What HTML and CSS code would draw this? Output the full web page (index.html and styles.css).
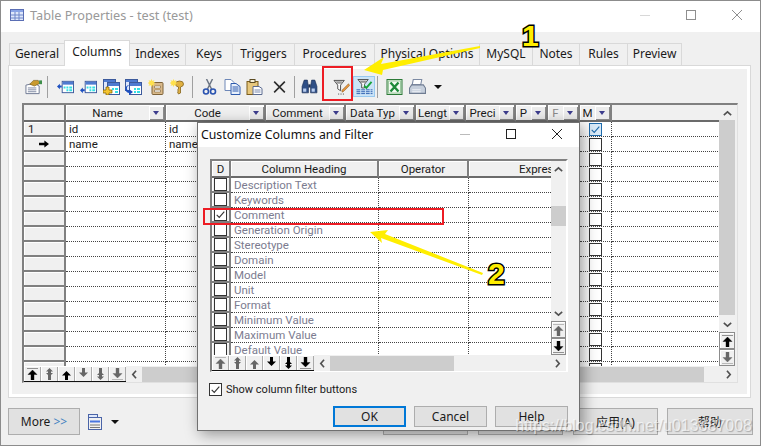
FILE: index.html
```html
<!DOCTYPE html>
<html lang="en">
<head>
    <meta charset="UTF-8">
    <meta name="viewport" content="width=device-width, initial-scale=1.0">
    <title>Table Properties - test (test)</title>
    <link rel="stylesheet" href="styles.css">
</head>
<body>
    <svg class="defs" xmlns="http://www.w3.org/2000/svg">
        <symbol id="i-table" viewBox="0 0 14 12">
            <rect x=".5" y=".5" width="13" height="11" fill="#dfe8fb" stroke="#5a6eb4"/>
            <rect x="1" y="1" width="12" height="2" fill="#8aa4e6"/>
            <path d="M1 6h12M1 9h12M5 3v8M9 3v8" stroke="#6f86c8"/>
        </symbol>
        <symbol id="i-prop" viewBox="0 0 18 16">
            <path d="M1 6l9-2 5 3v8H1z" fill="#fff" stroke="#6b7690"/>
            <path d="M3 9h9M3 11h9M3 13h9" stroke="#7b86a0"/>
            <path d="M5 5l4-4h5l2 3-6 3z" fill="#c99a2e" stroke="#6b5010" stroke-width=".6"/>
            <rect x="15" y="1" width="3" height="4" fill="#3f8f4a"/>
        </symbol>
        <symbol id="i-rowa" viewBox="0 0 18 15">
            <rect x="5.5" y="1.5" width="12" height="12" fill="#fff" stroke="#3c5a9c"/>
            <rect x="6" y="2" width="11" height="3" fill="#4f7bd0"/>
            <path d="M7 7h2v2H7zM10 7h2v2h-2zM13 7h3v2h-3zM10 10h2v2h-2zM13 10h3v2h-3z" fill="#35dfe4"/>
            <path d="M0 7l3-3v2h2v2H3v2z" fill="#1c4fc0"/>
        </symbol>
        <symbol id="i-rowb" viewBox="0 0 18 15">
            <rect x="5.5" y="1.5" width="12" height="12" fill="#fff" stroke="#3c5a9c"/>
            <rect x="6" y="2" width="11" height="3" fill="#4f7bd0"/>
            <path d="M7 7h2v2H7zM10 7h2v2h-2zM13 7h3v2h-3zM10 10h2v2h-2zM13 10h3v2h-3z" fill="#35dfe4"/>
            <path d="M0 11l3-3v2h2v2H3v2z" fill="#1c4fc0"/>
        </symbol>
        <symbol id="i-tadd" viewBox="0 0 17 16">
            <rect x=".5" y=".5" width="12" height="11" fill="#dfe8fb" stroke="#3c5a9c"/>
            <rect x="1" y="1" width="11" height="2" fill="#4f7bd0"/>
            <rect x="4.5" y="3.5" width="12" height="12" fill="#fff" stroke="#3c5a9c"/>
            <rect x="5" y="4" width="11" height="3" fill="#4f7bd0"/>
            <path d="M9 9h2v2H9zM12 9h3v2h-3zM12 12h3v2h-3z" fill="#35dfe4"/>
            <path d="M3 8h3v3h3v3H6v2H3v-2H0v-3h3z" fill="#f4c430" stroke="#7a5a00" stroke-width=".7"/>
        </symbol>
        <symbol id="i-tmove" viewBox="0 0 17 16">
            <rect x=".5" y=".5" width="12" height="11" fill="#dfe8fb" stroke="#3c5a9c"/>
            <rect x="1" y="1" width="11" height="2" fill="#4f7bd0"/>
            <rect x="4.5" y="3.5" width="12" height="12" fill="#fff" stroke="#3c5a9c"/>
            <rect x="5" y="4" width="11" height="3" fill="#4f7bd0"/>
            <path d="M9 9h2v2H9zM12 9h3v2h-3zM9 12h2v2H9zM12 12h3v2h-3z" fill="#35dfe4"/>
            <path d="M5 6C1 7 1 11 4 12v-2l4 3-4 3v-2C-1 13-1 6 5 6z" fill="#1c4fc0"/>
        </symbol>
        <symbol id="i-safe" viewBox="0 0 16 16">
            <rect x="3.5" y="3.5" width="11" height="12" rx="1" fill="#d9b98a" stroke="#7d6238"/>
            <path d="M6 7h6v2H6zM6 11h6v2H6z" fill="#fff" stroke="#7d6238" stroke-width=".6"/>
            <path d="M3 0l1 2 2-1-1 2 2 1-2 1 1 2-2-1-1 2-1-2-2 1 1-2-2-1 2-1-1-2 2 1z" fill="#ffe14d"/>
        </symbol>
        <symbol id="i-key" viewBox="0 0 16 16">
            <path d="M5 5a4 3 0 0 1 8 0 4 3 0 0 1-3 3v6l-2 1-1-2 1-1-1-1 1-1V8a4 3 0 0 1-3-3z" fill="#e0b040" stroke="#84631a" stroke-width=".8"/>
            <path d="M3 0l1 2 2-1-1 2 2 1-2 1 1 2-2-1-1 2-1-2-2 1 1-2-2-1 2-1-1-2 2 1z" fill="#ffe14d"/>
        </symbol>
        <symbol id="i-cut" viewBox="0 0 14 16">
            <path d="M4 0l5 10M10 0L5 10" stroke="#6d7684" stroke-width="1.5" fill="none"/>
            <circle cx="3.5" cy="12.5" r="2.5" fill="none" stroke="#2a53b0" stroke-width="1.6"/>
            <circle cx="10.5" cy="12.5" r="2.5" fill="none" stroke="#2a53b0" stroke-width="1.6"/>
        </symbol>
        <symbol id="i-copy" viewBox="0 0 16 16">
            <path d="M.5.5h6l3 3v8h-9z" fill="#fff" stroke="#6e88b8"/>
            <path d="M6.5 4.5h5l4 3v8h-9z" fill="#e8f0fb" stroke="#2e5bad"/>
            <path d="M8 8h6M8 10h6M8 12h6" stroke="#2e5bad"/>
        </symbol>
        <symbol id="i-paste" viewBox="0 0 16 16">
            <rect x=".5" y="2.5" width="11" height="13" fill="#e7c77c" stroke="#7a5c1c"/>
            <rect x="3.5" y=".5" width="5" height="3" fill="#f7f0d8" stroke="#5b4a20"/>
            <path d="M6.5 7.5h6l3 2v6h-9z" fill="#fff" stroke="#5a6a90"/>
            <path d="M8 11h6M8 13h6" stroke="#7a8ab0"/>
        </symbol>
        <symbol id="i-del" viewBox="-2 -2 18 18">
            <path d="M1 1l12 12M13 1L1 13" stroke="#2c2c2c" stroke-width="1.8" fill="none"/>
        </symbol>
        <symbol id="i-find" viewBox="0 0 16 15">
            <path d="M3 1h3l1 6v6H1V7zM10 1h3l2 6v6H9V7z" fill="#2f4f86" stroke="#1c2f55" stroke-width=".6"/>
            <path d="M7 5h2v3H7z" fill="#1c2f55"/>
            <path d="M2 9h3v3H2zM10 9h3v3h-3z" fill="#b9cdef"/>
        </symbol>
        <symbol id="i-fedit" viewBox="0 0 17 17">
            <path d="M.5 1.5h11l-4 5v6l-3-2v-4z" fill="#fff" stroke="#4a4a4a"/>
            <path d="M2 2.5h8l-2 2.500H4z" fill="#9a9a9a"/>
            <path d="M9 12l7-7 1 2-6 6-2 1z" fill="#e8963c" stroke="#8a5a1e" stroke-width=".6"/>
            <path d="M5 16h1M7.500 16h1M10 16h1" stroke="#333"/>
        </symbol>
        <symbol id="i-fcheck" viewBox="0 0 17 17">
            <path d="M1.500.5h11l-4 5v4h-3v-4z" fill="#fff" stroke="#4a4a4a"/>
            <path d="M3 1.500h8l-2 2.500H5z" fill="#8f8f8f"/>
            <path d="M8 7l2.500 2.500L16 3" stroke="#19a33a" stroke-width="2" fill="none"/>
            <path d="M0 11.500h17M0 13.500h17M0 15.500h17" stroke="#2f5fb0" stroke-dasharray="4 1"/>
        </symbol>
        <symbol id="i-excel" viewBox="0 0 16 16">
            <rect x=".5" y=".5" width="15" height="15" fill="#dfeedd" stroke="#2c7a38"/>
            <rect x="2" y="2" width="12" height="12" fill="#f6fbf4" stroke="#9cc9a0"/>
            <path d="M4 3.500l8 9M12 3.500l-8 9" stroke="#1f8a3a" stroke-width="2.400"/>
        </symbol>
        <symbol id="i-print" viewBox="0 0 16 15">
            <path d="M4 .5h8l-1 5H3z" fill="#fff" stroke="#7c8aa3"/>
            <path d="M2.500 5.500h11l2 3v5H.5v-5z" fill="#c6cfdc" stroke="#6f7c92"/>
            <path d="M3 10h8M3 12h8" stroke="#eef1f6"/>
        </symbol>
        <symbol id="i-list" viewBox="0 0 14 16">
            <rect x=".5" y=".5" width="9" height="4" fill="#dfe8fb" stroke="#4a64a8"/>
            <rect x=".5" y="3.500" width="13" height="12" fill="#f1f1f1" stroke="#4a64a8"/>
            <rect x="2" y="6.500" width="10" height="2" fill="#4a76e0"/>
            <path d="M2 11h10M2 13.500h10" stroke="#777"/>
        </symbol>
        <symbol id="i-first" viewBox="0 0 11 12">
            <path d="M0 .5h11M5.500 2L10 6.500H7V12H4V6.500H1z" fill="currentColor" stroke="currentColor" stroke-width=".4"/>
        </symbol>
        <symbol id="i-prev2" viewBox="0 0 11 12">
            <path d="M5.500 0L9 3.500H7V5h2L7 7h0v5H4V7L2 5h2V3.500H2z" fill="currentColor"/>
        </symbol>
        <symbol id="i-prev" viewBox="0 0 11 12">
            <path d="M5.500 3L10 7.500H7V12H4V7.500H1z" fill="currentColor"/>
        </symbol>
        <symbol id="i-next" viewBox="0 0 11 12">
            <path d="M4 0h3v4.500h3L5.500 9 1 4.500h3z" fill="currentColor"/>
        </symbol>
        <symbol id="i-next2" viewBox="0 0 11 12">
            <path d="M4 0h3v5l2 2H7v1.500h2L5.500 12 2 8.500h2V7H2l2-2z" fill="currentColor"/>
        </symbol>
        <symbol id="i-last" viewBox="0 0 11 12">
            <path d="M4 0h3v5.500h3L5.500 10 1 5.500h3zM0 11.500h11" fill="currentColor" stroke="currentColor" stroke-width=".4"/>
        </symbol>
        <symbol id="i-up" viewBox="0 0 11 7"><path d="M1 6l4.500-4L10 6" fill="none" stroke="currentColor" stroke-width="2"/></symbol>
        <symbol id="i-down" viewBox="0 0 11 7"><path d="M1 1l4.500 4L10 1" fill="none" stroke="currentColor" stroke-width="2"/></symbol>
        <symbol id="i-left" viewBox="0 0 7 11"><path d="M6 1L2 5.500 6 10" fill="none" stroke="currentColor" stroke-width="2"/></symbol>
        <symbol id="i-right" viewBox="0 0 7 11"><path d="M1 1l4 4.500L1 10" fill="none" stroke="currentColor" stroke-width="2"/></symbol>
        <symbol id="i-check" viewBox="0 0 13 13"><path d="M2 7l3 3 6-7" fill="none" stroke="currentColor" stroke-width="1.300"/></symbol>
        <symbol id="i-arrow" viewBox="0 0 13 9"><path d="M0 3h7V0l6 4.500L7 9V6H0z" fill="#000"/></symbol>
    </svg>

    <div class="window">
        <header class="titlebar">
            <svg class="title-icon"><use href="#i-table"/></svg>
            <span class="title-text">Table Properties - test (test)</span>
            <div class="win-controls faded">
                <span class="win-min"></span>
                <span class="win-max"></span>
                <span class="win-close"></span>
            </div>
        </header>

        <nav class="tabs">
            <a class="tab w55">General</a>
            <a class="tab active w65">Columns</a>
            <a class="tab w56">Indexes</a>
            <a class="tab w47">Keys</a>
            <a class="tab w62">Triggers</a>
            <a class="tab w80">Procedures</a>
            <a class="tab w105">Physical Options</a>
            <a class="tab w53">MySQL</a>
            <a class="tab w47">Notes</a>
            <a class="tab w48">Rules</a>
            <a class="tab w54">Preview</a>
        </nav>

        <section class="panel">
            <div class="toolbar">
                <span class="tool"><svg class="ico"><use href="#i-prop"/></svg></span>
                <span class="sep s1"></span>
                <span class="tool"><svg class="ico"><use href="#i-rowa"/></svg></span>
                <span class="tool"><svg class="ico"><use href="#i-rowb"/></svg></span>
                <span class="tool"><svg class="ico"><use href="#i-tadd"/></svg></span>
                <span class="tool"><svg class="ico"><use href="#i-tmove"/></svg></span>
                <span class="tool"><svg class="ico"><use href="#i-safe"/></svg></span>
                <span class="tool"><svg class="ico"><use href="#i-key"/></svg></span>
                <span class="sep s2"></span>
                <span class="tool"><svg class="ico"><use href="#i-cut"/></svg></span>
                <span class="tool"><svg class="ico"><use href="#i-copy"/></svg></span>
                <span class="tool"><svg class="ico"><use href="#i-paste"/></svg></span>
                <span class="tool tool-del"><svg class="ico"><use href="#i-del"/></svg></span>
                <span class="sep s3"></span>
                <span class="tool"><svg class="ico"><use href="#i-find"/></svg></span>
                <span class="sep s4"></span>
                <span class="tool"><svg class="ico"><use href="#i-fedit"/></svg></span>
                <span class="tool on"><svg class="ico"><use href="#i-fcheck"/></svg></span>
                <span class="sep s5"></span>
                <span class="tool"><svg class="ico"><use href="#i-excel"/></svg></span>
                <span class="tool"><svg class="ico"><use href="#i-print"/></svg></span>
                <span class="caret"></span>
            </div>

            <div class="gridbox">
                <div class="grid-top">
                    <div class="view">
                        <table class="cols">
                            <colgroup>
                                <col class="c42"><col class="c100"><col class="c100"><col class="c80"><col class="c70">
                                <col class="c50"><col class="c50"><col class="c32"><col class="c32"><col class="c32"><col class="c108">
                            </colgroup>
                            <thead>
                                <tr>
                                    <th class="corner"></th>
                                    <th><div class="hd"><span>Name</span><i class="fbtn"></i></div></th>
                                    <th><div class="hd"><span>Code</span><i class="fbtn"></i></div></th>
                                    <th><div class="hd"><span>Comment</span><i class="fbtn"></i></div></th>
                                    <th><div class="hd"><span>Data Typ</span><i class="fbtn"></i></div></th>
                                    <th><div class="hd"><span>Lengt</span><i class="fbtn"></i></div></th>
                                    <th><div class="hd"><span>Preci</span><i class="fbtn"></i></div></th>
                                    <th><div class="hd"><span>P</span><i class="fbtn"></i></div></th>
                                    <th><div class="hd dim"><span>F</span><i class="fbtn"></i></div></th>
                                    <th><div class="hd"><span>M</span><i class="fbtn"></i></div></th>
                                    <th class="blank"></th>
                                </tr>
                            </thead>
                            <tbody>
                                <tr><th class="rowh num">1</th><td>id</td><td>id</td><td colspan="6"></td><td class="mid"><i class="box hot"><svg><use href="#i-check"/></svg></i></td><td></td></tr>
                                <tr><th class="rowh"><svg class="cur"><use href="#i-arrow"/></svg></th><td>name</td><td>name</td><td colspan="6"></td><td class="mid"><i class="box"></i></td><td></td></tr>
                                <tr><th class="rowh"></th><td></td><td></td><td colspan="6"></td><td class="mid"><i class="box"></i></td><td></td></tr>
                                <tr><th class="rowh"></th><td></td><td></td><td colspan="6"></td><td class="mid"><i class="box"></i></td><td></td></tr>
                                <tr><th class="rowh"></th><td></td><td></td><td colspan="6"></td><td class="mid"><i class="box"></i></td><td></td></tr>
                                <tr><th class="rowh"></th><td></td><td></td><td colspan="6"></td><td class="mid"><i class="box"></i></td><td></td></tr>
                                <tr><th class="rowh"></th><td></td><td></td><td colspan="6"></td><td class="mid"><i class="box"></i></td><td></td></tr>
                                <tr><th class="rowh"></th><td></td><td></td><td colspan="6"></td><td class="mid"><i class="box"></i></td><td></td></tr>
                                <tr><th class="rowh"></th><td></td><td></td><td colspan="6"></td><td class="mid"><i class="box"></i></td><td></td></tr>
                                <tr><th class="rowh"></th><td></td><td></td><td colspan="6"></td><td class="mid"><i class="box"></i></td><td></td></tr>
                                <tr><th class="rowh"></th><td></td><td></td><td colspan="6"></td><td class="mid"><i class="box"></i></td><td></td></tr>
                                <tr><th class="rowh"></th><td></td><td></td><td colspan="6"></td><td class="mid"><i class="box"></i></td><td></td></tr>
                                <tr><th class="rowh"></th><td></td><td></td><td colspan="6"></td><td class="mid"><i class="box"></i></td><td></td></tr>
                                <tr><th class="rowh"></th><td></td><td></td><td colspan="6"></td><td class="mid"><i class="box"></i></td><td></td></tr>
                                <tr><th class="rowh"></th><td></td><td></td><td colspan="6"></td><td class="mid"><i class="box"></i></td><td></td></tr>
                                <tr><th class="rowh"></th><td></td><td></td><td colspan="6"></td><td class="mid"><i class="box"></i></td><td></td></tr>
                                <tr><th class="rowh"></th><td></td><td></td><td colspan="6"></td><td class="mid"><i class="box"></i></td><td></td></tr>
                            </tbody>
                        </table>
                    </div>
                    <div class="vscroll main-v">
                        <span class="sarrow"><svg class="chev-v"><use href="#i-up"/></svg></span>
                        <div class="vtrack"><div class="vthumb"></div></div>
                        <span class="sarrow"><svg class="chev-v"><use href="#i-down"/></svg></span>
                        <span class="vbtn black"><svg class="step"><use href="#i-first"/></svg></span>
                        <span class="vbtn grey"><svg class="step"><use href="#i-last"/></svg></span>
                    </div>
                </div>
                <div class="grid-bottom">
                    <div class="steps">
                        <span class="stepbtn black"><svg class="step"><use href="#i-first"/></svg></span>
                        <span class="stepbtn grey"><svg class="step"><use href="#i-prev2"/></svg></span>
                        <span class="stepbtn black"><svg class="step"><use href="#i-prev"/></svg></span>
                        <span class="stepbtn grey"><svg class="step"><use href="#i-next"/></svg></span>
                        <span class="stepbtn grey"><svg class="step"><use href="#i-next2"/></svg></span>
                        <span class="stepbtn grey"><svg class="step"><use href="#i-last"/></svg></span>
                    </div>
                    <div class="hscroll">
                        <svg class="chev-h"><use href="#i-left"/></svg>
                        <div class="hthumb main-h"></div>
                        <svg class="chev-h"><use href="#i-right"/></svg>
                    </div>
                </div>
            </div>
        </section>

        <footer class="actions">
            <button class="btn more">More <span class="more-mark">&gt;&gt;</span></button>
            <svg class="list-icon"><use href="#i-list"/></svg>
            <span class="caret"></span>
            <div class="actions-right">
                <button class="btn wide">确定</button>
                <button class="btn wide">取消</button>
                <button class="btn wide">应用(A)</button>
                <button class="btn wide">帮助</button>
            </div>
        </footer>
    </div>

    <div class="dialog">
        <header class="dlg-title">
            <span>Customize Columns and Filter</span>
            <div class="win-controls">
                <span class="win-min"></span>
                <span class="win-max"></span>
                <span class="win-close"></span>
            </div>
        </header>
        <div class="dlg-body">
            <div class="dlg-box">
                <div class="grid-top">
                    <div class="view dlg-view">
                        <table class="cols dlg-cols">
                            <colgroup><col class="c19"><col class="c148"><col class="c90"><col class="c158"></colgroup>
                            <thead>
                                <tr>
                                    <th><div class="hd plain"><span>D</span></div></th>
                                    <th><div class="hd plain"><span>Column Heading</span></div></th>
                                    <th><div class="hd plain"><span>Operator</span></div></th>
                                    <th><div class="hd plain"><span>Expression</span></div></th>
                                </tr>
                            </thead>
                            <tbody>
                                <tr><th class="rowh"><i class="box"></i></th><td>Description Text</td><td></td><td></td></tr>
                                <tr><th class="rowh"><i class="box"></i></th><td>Keywords</td><td></td><td></td></tr>
                                <tr><th class="rowh"><i class="box"><svg><use href="#i-check"/></svg></i></th><td>Comment</td><td></td><td></td></tr>
                                <tr><th class="rowh"><i class="box"></i></th><td>Generation Origin</td><td></td><td></td></tr>
                                <tr><th class="rowh"><i class="box"></i></th><td>Stereotype</td><td></td><td></td></tr>
                                <tr><th class="rowh"><i class="box"></i></th><td>Domain</td><td></td><td></td></tr>
                                <tr><th class="rowh"><i class="box"></i></th><td>Model</td><td></td><td></td></tr>
                                <tr><th class="rowh"><i class="box"></i></th><td>Unit</td><td></td><td></td></tr>
                                <tr><th class="rowh"><i class="box"></i></th><td>Format</td><td></td><td></td></tr>
                                <tr><th class="rowh"><i class="box"></i></th><td>Minimum Value</td><td></td><td></td></tr>
                                <tr><th class="rowh"><i class="box"></i></th><td>Maximum Value</td><td></td><td></td></tr>
                                <tr><th class="rowh"><i class="box"></i></th><td>Default Value</td><td></td><td></td></tr>
                            </tbody>
                        </table>
                    </div>
                    <div class="vscroll dlg-v">
                        <span class="sarrow"><svg class="chev-v"><use href="#i-up"/></svg></span>
                        <div class="vtrack"><div class="vthumb"></div></div>
                        <span class="sarrow"><svg class="chev-v"><use href="#i-down"/></svg></span>
                        <span class="vbtn grey"><svg class="step"><use href="#i-first"/></svg></span>
                        <span class="vbtn black"><svg class="step"><use href="#i-last"/></svg></span>
                    </div>
                </div>
                <div class="grid-bottom">
                    <div class="steps">
                        <span class="stepbtn grey"><svg class="step"><use href="#i-first"/></svg></span>
                        <span class="stepbtn grey"><svg class="step"><use href="#i-prev2"/></svg></span>
                        <span class="stepbtn grey"><svg class="step"><use href="#i-prev"/></svg></span>
                        <span class="stepbtn black"><svg class="step"><use href="#i-next"/></svg></span>
                        <span class="stepbtn black"><svg class="step"><use href="#i-next2"/></svg></span>
                        <span class="stepbtn black"><svg class="step"><use href="#i-last"/></svg></span>
                    </div>
                    <div class="hscroll">
                        <svg class="chev-h"><use href="#i-left"/></svg>
                        <div class="hthumb dlg-h"></div>
                        <svg class="chev-h"><use href="#i-right"/></svg>
                    </div>
                </div>
            </div>
            <label class="show-filter"><i class="box"><svg><use href="#i-check"/></svg></i>Show column filter buttons</label>
            <div class="dlg-actions">
                <button class="btn dlg-btn default">OK</button>
                <button class="btn dlg-btn">Cancel</button>
                <button class="btn dlg-btn">Help</button>
            </div>
        </div>
    </div>

    <svg class="marks" viewBox="0 0 761 446" xmlns="http://www.w3.org/2000/svg">
        <rect class="mark-red" x="323" y="67" width="29" height="33"/>
        <rect class="mark-red" x="204" y="209" width="239" height="15"/>
        <polygon class="mark-yellow" points="364,70 384,57 381,64 480,46 480,48 383,70 382,75"/>
        <polygon class="mark-yellow" points="370,232 388,230 385,234 483,273 482,275 381,238 382,243"/>
        <text class="mark-num" x="522" y="46">1</text>
        <text class="mark-num" x="488" y="284">2</text>
    </svg>

    <div class="watermark">https://blog.csdn.net/u013887008</div>
</body>
</html>
```

FILE: styles.css
```css
* {
    box-sizing: border-box;
}

html, body {
    margin: 0;
    height: 446px;
    overflow: hidden;
}

body {
    position: relative;
    font-family: "Noto Sans", "Noto Sans CJK SC", sans-serif;
    font-size: 12px;
    color: #1a1a1a;
    background: #f0f0f0;
}

.defs {
    display: none;
}

.window {
    width: 761px;
    height: 446px;
    border: 1px solid #8c8c8c;
    background: #f0f0f0;
    display: flex;
    flex-direction: column;
}

/* title bar */
.titlebar {
    height: 31px;
    flex: none;
    background: #fff;
    display: flex;
    align-items: center;
    padding-left: 9px;
    padding-bottom: 3px;
}

.title-icon {
    width: 14px;
    height: 12px;
    margin-right: 6px;
}

.title-text {
    font-size: 12.7px;
    color: #999;
}

.win-controls {
    margin-left: auto;
    display: flex;
    align-items: center;
    gap: 36px;
    padding-right: 18px;
}

.win-controls span {
    display: block;
    width: 10px;
    height: 10px;
}

.win-min {
    border-bottom: 1px solid #222;
    height: 1px !important;
}

.win-max {
    border: 1px solid #222;
}

.win-close {
    background:
        linear-gradient(45deg, transparent 46%, #222 46%, #222 54%, transparent 54%),
        linear-gradient(-45deg, transparent 46%, #222 46%, #222 54%, transparent 54%);
}

.faded {
    opacity: .5;
}

.faded .win-min {
    opacity: .35;
}

/* tabs */
.tabs {
    height: 33px;
    flex: none;
    display: flex;
    align-items: flex-end;
    padding-left: 9px;
    position: relative;
}

.tab {
    height: 22px;
    line-height: 20px;
    text-align: center;
    border: 1px solid #d9d9d9;
    border-bottom: none;
    margin-left: -1px;
    background: #f0f0f0;
    white-space: nowrap;
}

.tab.active {
    height: 26px;
    line-height: 22px;
    margin-bottom: -1px;
    background: #fff;
}

.w47 { width: 48px; }
.w48 { width: 49px; }
.w53 { width: 54px; }
.w54 { width: 55px; }
.w55 { width: 56px; }
.w56 { width: 57px; }
.w62 { width: 63px; }
.w65 { width: 66px; }
.w80 { width: 81px; }
.w105 { width: 106px; }

/* property sheet */
.panel {
    height: 333px;
    flex: none;
    margin-left: 7px;
    width: 743px;
    border: 1px solid #d9d9d9;
    box-shadow: inset 0 0 0 3px #fff;
    padding: 3px 12px 0 13px;
}

.toolbar {
    height: 34px;
    display: flex;
    align-items: center;
    padding-top: 1px;
}

.tool {
    width: 22.6px;
    height: 21px;
    flex: none;
    display: flex;
    align-items: center;
    justify-content: center;
}

.tool-del {
    margin-left: 2px;
}

.tool.on {
    background: #cce4f7;
    border: 1px solid #99c9ef;
}

.ico {
    width: 17px;
    height: 16px;
}

.sep {
    width: 1px;
    height: 22px;
    flex: none;
    background: #a0a0a0;
}

.s1 { margin: 0 7px 0 2px; }
.s2 { margin: 0 5px 0 2px; }
.s3 { margin: 0 4px 0 3px; }
.s4 { margin: 0 6px 0 2px; }
.s5 { margin: 0 5px 0 2px; }

.caret {
    width: 0;
    height: 0;
    margin-left: 5px;
    border-left: 4px solid transparent;
    border-right: 4px solid transparent;
    border-top: 4px solid #111;
}

/* grids */
.gridbox {
    width: 716px;
    height: 280px;
    border-top: 2px solid #808080;
    border-left: 2px solid #808080;
    border-right: 1px solid #e0e0e0;
    border-bottom: 1px solid #e0e0e0;
    display: flex;
    flex-direction: column;
}

.grid-top {
    display: flex;
    height: 261px;
    padding-right: 2px;
}

.view {
    width: 696px;
    height: 261px;
    overflow: hidden;
    background: #fff;
}

.cols {
    table-layout: fixed;
    width: 696px;
    border-collapse: separate;
    border-spacing: 0;
    font-family: Roboto, sans-serif;
    font-size: 11.5px;
}

.c19 { width: 19px; }
.c32 { width: 32px; }
.c42 { width: 42px; }
.c50 { width: 50px; }
.c70 { width: 70px; }
.c80 { width: 80px; }
.c90 { width: 90px; }
.c100 { width: 100px; }
.c108 { width: 108px; }
.c148 { width: 148px; }
.c158 { width: 158px; }

.cols thead th {
    height: 17px;
    padding: 0;
    background: #f0f0f0;
    border-bottom: 2px solid #6b6b6b;
    border-right: 2px solid #808080;
    font-weight: 400;
}

.cols thead th.blank {
    border-right: none;
}

.hd {
    height: 15px;
    display: flex;
    align-items: center;
    box-shadow: inset 1px 1px 0 #fff;
    white-space: nowrap;
    overflow: hidden;
}

.hd span {
    flex: 1;
    text-align: center;
}

.dim span {
    color: #8a8a8a;
}

.fbtn {
    flex: none;
    width: 15px;
    height: 14px;
    background: #ececec;
    box-shadow: inset 1px 1px 0 #fff, inset -1px -1px 0 #8a8a8a;
    position: relative;
}

.fbtn::after {
    content: "";
    position: absolute;
    left: 4px;
    top: 5px;
    border-left: 3.5px solid transparent;
    border-right: 3.5px solid transparent;
    border-top: 4px solid #3c3c8c;
}

.cols tbody td {
    height: 15px;
    padding: 1px 0 0 3px;
    border-bottom: 1px dotted #444;
    border-right: 1px dotted #444;
    white-space: nowrap;
    overflow: hidden;
    line-height: 13px;
}

.cols tbody td:last-child {
    border-right: none;
}

.rowh {
    height: 15px;
    padding: 0;
    background: #f0f0f0;
    border-bottom: 2px solid #808080;
    border-right: 2px solid #808080;
    box-shadow: inset 1px 1px 0 #fff;
    font-weight: 400;
}

.num {
    text-align: left;
    padding-left: 4px;
    line-height: 12px;
}

.cur {
    width: 10px;
    height: 8px;
    display: block;
    margin: 0 auto;
}

.cols tbody td.mid {
    padding: 0;
    text-align: center;
}

.box {
    display: block;
    width: 13px;
    height: 13px;
    margin: 0 auto;
    background: #fff;
    border: 1px solid #333;
    color: #333;
}

.box svg {
    display: block;
    width: 11px;
    height: 11px;
}

.box.hot {
    background: #d9eaf8;
    border-color: #1f6bab;
    color: #1f6bab;
}

.vscroll {
    width: 16px;
    flex: none;
    display: flex;
    flex-direction: column;
}

.sarrow {
    flex: none;
    height: 15px;
    display: flex;
    align-items: center;
    justify-content: center;
    color: #505050;
}

.chev-v {
    width: 9px;
    height: 6px;
}

.chev-h {
    width: 6px;
    height: 9px;
    flex: none;
    color: #505050;
}

.vtrack {
    flex: 1;
}

.vthumb {
    background: #cdcdcd;
}

.main-v .vthumb {
    height: 195px;
}

.dlg-v .vthumb {
    margin-top: 30px;
    height: 20px;
}

.vbtn {
    flex: none;
    height: 17px;
    display: flex;
    align-items: center;
    justify-content: center;
    background: #f0f0f0;
    box-shadow: inset 1px 1px 0 #8c8c8c, inset -1px -1px 0 #8c8c8c, inset 2px 2px 0 #fff;
}

.step {
    width: 11px;
    height: 12px;
    display: block;
}

.black { color: #000; }
.grey { color: #666; }

.grid-bottom {
    display: flex;
    height: 16px;
}

.steps {
    display: flex;
    flex: none;
    border-bottom: 1px solid #111;
}

.stepbtn {
    width: 17px;
    height: 15px;
    display: flex;
    align-items: center;
    justify-content: center;
    background: #f0f0f0;
    box-shadow: inset 1px 1px 0 #fff, inset -1px 0 0 #aaa;
}

.hscroll {
    flex: 1;
    display: flex;
    align-items: center;
    padding: 0 5px;
    gap: 5px;
}

.hthumb {
    height: 15px;
    background: #cdcdcd;
    flex: none;
}

.hscroll .chev-h:last-child {
    margin-left: auto;
}

.main-h {
    width: 562px;
}

.dlg-h {
    width: 124px;
}

/* bottom buttons */
.actions {
    flex: 1;
    display: flex;
    align-items: flex-start;
    padding: 10px 7px 0 7px;
}

.btn {
    height: 27px;
    padding: 0;
    border: 1px solid #adadad;
    background: #e1e1e1;
    font: inherit;
    color: #1a1a1a;
}

.more {
    width: 72px;
}

.more-mark {
    color: #3f7fc0;
}

.list-icon {
    width: 14px;
    height: 16px;
    margin: 6px 0 0 8px;
}

.actions .caret {
    margin: 12px 0 0 9px;
}

.actions-right {
    margin-left: auto;
    display: flex;
    gap: 10px;
}

.wide {
    width: 85px;
}

.wide:last-child {
    width: 86px;
    margin-left: -1px;
}

/* dialog on top of the sheet */
.dialog {
    position: absolute;
    left: 197px;
    top: 122px;
    width: 383px;
    height: 309px;
    border: 1px solid #707070;
    background: #f0f0f0;
    box-shadow: 3px 3px 14px rgba(0, 0, 0, .4);
    display: flex;
    flex-direction: column;
}

.dlg-title {
    height: 24px;
    flex: none;
    background: #fff;
    display: flex;
    align-items: center;
    padding-left: 3px;
    padding-bottom: 2px;
    color: #111;
    font-size: 12.3px;
}

.dlg-title .win-controls {
    padding-right: 17px;
}

.dlg-title .win-min {
    border-color: #bbb;
}

.dlg-body {
    flex: 1;
    padding: 12px 11px 0 12px;
}

.dlg-box {
    width: 358px;
    height: 213px;
    border-top: 2px solid #808080;
    border-left: 2px solid #808080;
    border-right: 2px solid #fff;
    border-bottom: 1px solid #fff;
}

.dlg-box .grid-top {
    height: 194px;
    padding-right: 0;
}

.dlg-view {
    width: 339px;
    height: 194px;
}

.dlg-cols {
    width: 415px;
}

.dlg-cols td:first-of-type {
    color: #7c7c90;
}

.dlg-cols .rowh .box {
    margin-left: 2px;
}

.plain {
    height: 15px;
}

.dlg-v {
    width: 15px;
}

.show-filter {
    display: flex;
    align-items: center;
    gap: 4px;
    margin: 9px 0 0 -1px;
    height: 16px;
    font-family: Roboto, sans-serif;
    font-size: 11px;
}

.show-filter .box {
    margin: 0;
    flex: none;
}

.dlg-actions {
    display: flex;
    justify-content: flex-end;
    gap: 8px;
    margin-top: 9px;
}

.dlg-btn {
    width: 73px;
    height: 21px;
    line-height: 17px;
}

.default {
    border: 2px solid #0078d7;
}

/* annotations drawn over the shot */
.marks {
    position: absolute;
    left: 0;
    top: 0;
    width: 761px;
    height: 446px;
    pointer-events: none;
}

.mark-red {
    fill: none;
    stroke: #ed1c24;
    stroke-width: 2;
}

.mark-yellow {
    fill: #ffee00;
}

.mark-num {
    font-family: "Liberation Sans", sans-serif;
    font-weight: 700;
    font-size: 30px;
    fill: #ffee00;
    stroke: #000;
    stroke-width: 3px;
    paint-order: stroke;
}

.watermark {
    position: absolute;
    right: 9px;
    top: 417px;
    font-family: "Liberation Sans", sans-serif;
    font-size: 16px;
    color: rgba(255, 255, 255, .65);
    text-shadow: 1px 1px 1px rgba(0, 0, 0, .25);
    white-space: nowrap;
}
```
